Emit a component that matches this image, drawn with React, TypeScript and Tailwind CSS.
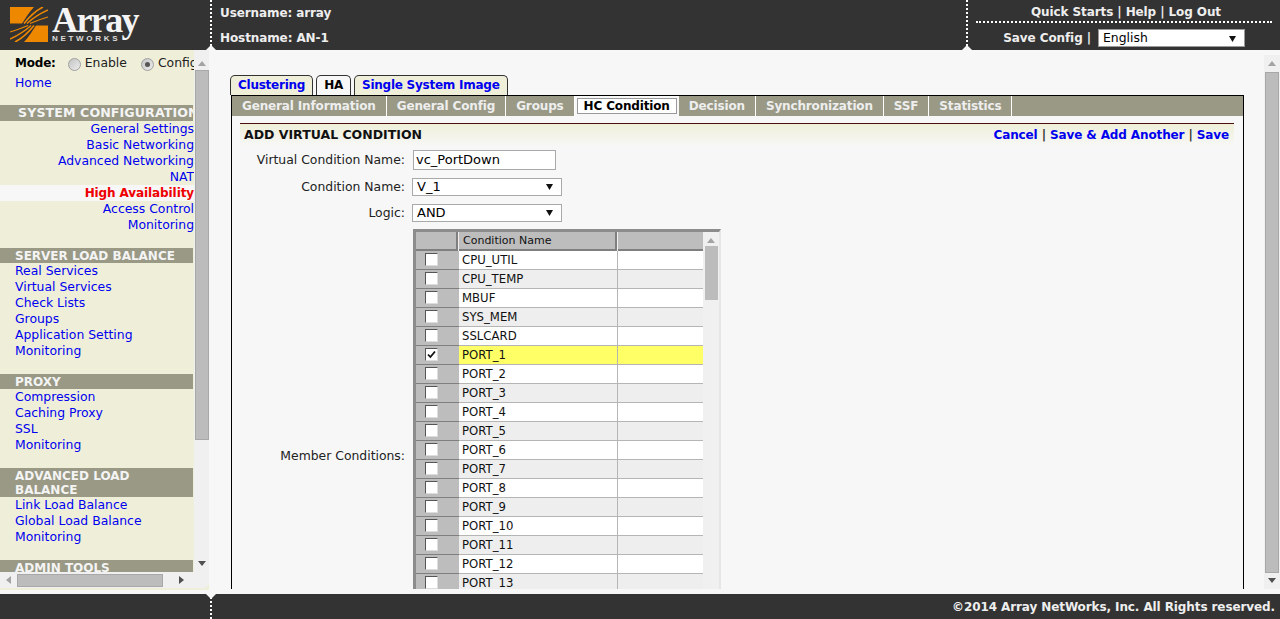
import React from "react";

const font = { fontFamily: '"DejaVu Sans", Verdana, sans-serif' };

const SECTIONS = [
  {
    title: ["SYSTEM CONFIGURATION"],
    right: true,
    items: ["General Settings", "Basic Networking", "Advanced Networking", "NAT", "High Availability", "Access Control", "Monitoring"],
  },
  {
    title: ["SERVER LOAD BALANCE"],
    items: ["Real Services", "Virtual Services", "Check Lists", "Groups", "Application Setting", "Monitoring"],
  },
  { title: ["PROXY"], items: ["Compression", "Caching Proxy", "SSL", "Monitoring"] },
  {
    title: ["ADVANCED LOAD", "BALANCE"],
    items: ["Link Load Balance", "Global Load Balance", "Monitoring"],
  },
  { title: ["ADMIN TOOLS"], items: [] as string[] },
];

const SUB_TABS = ["General Information", "General Config", "Groups", "HC Condition", "Decision", "Synchronization", "SSF", "Statistics"];

const CONDITIONS = [
  "CPU_UTIL", "CPU_TEMP", "MBUF", "SYS_MEM", "SSLCARD", "PORT_1", "PORT_2", "PORT_3", "PORT_4", "PORT_5",
  "PORT_6", "PORT_7", "PORT_8", "PORT_9", "PORT_10", "PORT_11", "PORT_12", "PORT_13", "PORT_14", "PORT_15",
  "PORT_16", "PORT_17", "PORT_18",
];

function Arrow({ dir, dark }: { dir: "up" | "down" | "left" | "right"; dark?: boolean }) {
  const pts = {
    up: "0,5 8,5 4,0",
    down: "0,0 8,0 4,5",
    left: "5,0 5,8 0,4",
    right: "0,0 0,8 5,4",
  }[dir];
  const vertical = dir === "up" || dir === "down";
  return (
    <svg width={vertical ? 8 : 5} height={vertical ? 5 : 8} className="block">
      <polygon points={pts} fill={dark ? "#505050" : "#a3a3a3"} />
    </svg>
  );
}

function FakeSelect({ value, className }: { value: string; className: string }) {
  return (
    <div className={`flex items-center justify-between bg-white pl-1 pr-2 text-black ${className}`}>
      <span>{value}</span>
      <svg width="7" height="6"><polygon points="0,0 7,0 3.5,6" fill="#111" /></svg>
    </div>
  );
}

function Check({ on }: { on?: boolean }) {
  return (
    <div className="flex h-[13px] w-[13px] items-center justify-center border border-t-[#555] border-l-[#555] border-r-[#ddd] border-b-[#ddd] bg-white">
      {on && (
        <svg width="9" height="9" viewBox="0 0 9 9">
          <path d="M1 4.5 L3.4 7 L8 1.5" fill="none" stroke="#111" strokeWidth="1.8" />
        </svg>
      )}
    </div>
  );
}

function Radio({ on }: { on?: boolean }) {
  return (
    <div className="mt-[3px] flex h-[13px] w-[13px] items-center justify-center rounded-full border border-[#a0a0a0] bg-gradient-to-br from-[#c4c4c4] to-[#ececec]">
      {on && <div className="h-[5px] w-[5px] rounded-full bg-[#555]" />}
    </div>
  );
}

function LogoHalf() {
  return (
    <>
      <path d="M0 0H24C19 5 16 11 12 16.5H0Z" fill="#ee8800" />
      <path d="M14 16.5C20 9 25 4 33 0" fill="none" stroke="#ee8800" strokeWidth="1.6" />
      <path d="M17 16.5C23 11 29 7 38 3" fill="none" stroke="#ee8800" strokeWidth="1.4" />
      <path d="M20 16.5C26 14 31 12 38 10" fill="none" stroke="#ee8800" strokeWidth="1.2" />
    </>
  );
}

function Logo() {
  return (
    <div className="flex items-start pl-[10px] pt-[7px]">
      <svg width="38" height="35" viewBox="0 0 38 35" className="shrink-0">
        <LogoHalf />
        <g transform="rotate(180 19 17.5)">
          <LogoHalf />
        </g>
      </svg>
      <div className="ml-[4px] flex flex-col">
        <span className="text-[36px] font-bold leading-[27px] tracking-[-1.6px] text-[#f4f4f4]" style={{ fontFamily: '"Liberation Serif", serif' }}>
          Array
        </span>
        <span className="mt-[1px] text-[8px] font-bold leading-[8px] tracking-[2.7px] text-[#dddddd]" style={{ fontFamily: '"Liberation Sans", sans-serif' }}>
          NETWORKS
        </span>
      </div>
    </div>
  );
}

function Header() {
  return (
    <div className="flex h-[50px] shrink-0 bg-[#333333] text-[12px] font-bold tracking-[-0.1px] text-[#eeeeee]">
      <div className="w-[210px] shrink-0">
        <Logo />
      </div>
      <div className="relative w-[2px] shrink-0 border-l-2 border-dotted border-white">
        <div className="absolute bottom-0 -left-[6px] h-0 w-0 border-x-[5px] border-b-[5px] border-x-transparent border-b-[#f7f7f7]" />
      </div>
      <div className="flex flex-1 flex-col pl-2 pt-[5px] leading-[16px]">
        <div className="h-[25px]">Username: array</div>
        <div>Hostname: AN-1</div>
      </div>
      <div className="relative w-[2px] shrink-0 border-l-2 border-dotted border-white">
        <div className="absolute bottom-0 -left-[6px] h-0 w-0 border-x-[5px] border-b-[5px] border-x-transparent border-b-[#f7f7f7]" />
      </div>
      <div className="flex w-[312px] shrink-0 flex-col pl-[8px] pr-[8px]">
        <div className="flex h-[23px] items-end justify-end border-b-2 border-dotted border-white pr-[51px] pb-[1px] leading-[16px]">
          Quick Starts | Help | Log Out
        </div>
        <div className="mt-[5px] flex items-center justify-end pr-[27px]">
          <span className="mt-[1px] mr-[7px]">Save Config |</span>
          <FakeSelect value="English" className="h-[18px] w-[147px] border border-[#999] pt-[2px] text-[12.4px] font-normal tracking-normal" />
        </div>
      </div>
    </div>
  );
}

function Sidebar() {
  return (
    <div className="flex h-[540px] w-[209px] shrink-0 flex-col overflow-hidden border-b-2 border-b-[#efefd9] bg-[#efefd9]">
      <div className="flex h-[522px] shrink-0 bg-[#f0f0f0]">
        <div className="w-[194px] shrink-0 overflow-hidden bg-[#efefd9] pt-[5px] text-[12.4px] leading-[16px]">
          <div className="flex items-start whitespace-nowrap pl-[15px] text-[#222]">
            <b className="text-[12px] tracking-[-0.2px] text-black">Mode:</b>
            <span className="ml-[12px]"><Radio /></span>
            <span className="ml-[4px]">Enable</span>
            <span className="ml-[14px]"><Radio on /></span>
            <span className="ml-[4px]">Config</span>
          </div>
          <div className="mt-[4px] pl-[15px] text-[#0000ee]">Home</div>
          {SECTIONS.map((s, i) => (
            <div key={i} className={i === 0 ? "mt-[14px]" : "mt-[15px]"}>
              <div className={`w-[193px] overflow-hidden whitespace-nowrap bg-[#999985] pt-[1px] font-bold leading-[14px] text-[#f4f4f4] ${s.right ? "pb-[1px] pl-[18px] text-[12.6px] tracking-[0.1px]" : "pl-[15px] text-[12px]"}`}>
                {s.title.map((t) => (
                  <div key={t}>{t}</div>
                ))}
              </div>
              {s.items.map((it) => (
                <div
                  key={it}
                  className={`h-[16px] whitespace-nowrap ${s.right ? "text-right" : "pl-[15px]"} ${
                    it === "High Availability" ? "bg-[#f7f7f7] text-[12px] font-bold tracking-[-0.1px] text-[#ee0000]" : "text-[#0000ee]"
                  }`}
                >
                  {it}
                </div>
              ))}
            </div>
          ))}
        </div>
        <div className="flex w-[15px] shrink-0 flex-col items-center pt-[11px]">
          <Arrow dir="up" />
          <div className="mt-[4px] h-[370px] w-[14px] border border-[#a8a8a8] bg-[#bcbcbc]" />
          <div className="mt-auto mb-[6px]"><Arrow dir="down" dark /></div>
        </div>
      </div>
      <div className="flex h-[16px] shrink-0 items-center rounded-br-[6px] bg-[#f0f0f0] pl-[6px] pr-[25px]">
        <Arrow dir="left" />
        <div className="ml-[6px] h-[13px] w-[146px] border border-[#a8a8a8] bg-[#bcbcbc]" />
        <div className="ml-auto"><Arrow dir="right" dark /></div>
      </div>
    </div>
  );
}

function ConditionTable() {
  return (
    <div className="flex h-[455px] w-[308px] border-t-[3px] border-l-[3px] border-r-[2px] border-t-[#8c8c8c] border-l-[#8c8c8c] border-r-[#e6e6e6] bg-[#f0f0f0] text-[11.7px] text-[#111]">
      <div className="w-[287px] shrink-0 overflow-hidden">
        <div className="flex h-[19px] bg-[#f0f0f0]">
          <div className="w-[42px] shrink-0 border-b-2 border-r-2 border-b-[#7f7f7f] border-r-[#7f7f7f] bg-[#bdbdbd]" />
          <div className="ml-px w-[158px] shrink-0 border-b-2 border-r-2 border-b-[#7f7f7f] border-r-[#7f7f7f] bg-[#bdbdbd] pl-1 text-[11px] leading-[17px]">
            Condition Name
          </div>
          <div className="ml-px flex-1 border-b-2 border-b-[#7f7f7f] bg-[#bdbdbd]" />
        </div>
        {CONDITIONS.map((c, i) => {
          const picked = c === "PORT_1";
          return (
            <div key={c} className={`flex h-[19px] ${picked ? "bg-[#ffff66]" : i % 2 ? "bg-[#eeeeee]" : "bg-white"}`}>
              <div className="flex w-[43px] shrink-0 items-center justify-center border-b border-b-[#7f7f7f] bg-[#bdbdbd] pr-[12px] pb-[2px]">
                <Check on={picked} />
              </div>
              <div className="w-[159px] shrink-0 border-b border-r border-[#b5b5b5] pl-[3px] leading-[18px]">{c}</div>
              <div className="flex-1 border-b border-[#b5b5b5]" />
            </div>
          );
        })}
      </div>
      <div className="flex flex-1 flex-col items-center pt-[6px]">
        <Arrow dir="up" />
        <div className="mt-[3px] h-[54px] w-[13px] bg-[#bcbcbc]" />
      </div>
    </div>
  );
}

function MainPanel() {
  return (
    <div className="flex h-[539px] flex-1 overflow-hidden">
      <div className="flex-1 overflow-hidden pl-[21px] pt-[25px]">
        <div className="flex text-[12px] font-bold leading-[17px] tracking-[-0.25px]">
          <div className="h-[20px] rounded-t-[5px] border border-b-0 border-[#333] bg-[#efefd9] px-[7px] pt-[1px] text-[#0000ee]">Clustering</div>
          <div className="ml-[3px] h-[20px] rounded-t-[5px] border border-b-0 border-[#333] bg-[#f7f7f7] px-[7px] pt-[1px] text-black">HA</div>
          <div className="ml-[3px] h-[20px] rounded-t-[5px] border border-b-0 border-[#333] bg-[#efefd9] px-[7px] pt-[1px] text-[#0000ee]">Single System Image</div>
        </div>
        <div className="ml-px h-[500px] w-[1013px] border-x border-t border-black">
          <div className="flex h-[20px] bg-[#999985] text-[12px] font-bold leading-[20px] tracking-[-0.15px] text-[#eeeeee]">
            {SUB_TABS.map((t) =>
              t === "HC Condition" ? (
                <div key={t} className="bg-[#f7f7f7] p-[2px]">
                  <div className="h-[16px] border border-[#999] bg-white px-[6px] leading-[14px] text-black">{t}</div>
                </div>
              ) : (
                <div key={t} className="border-r border-white px-[10px]">
                  {t}
                </div>
              )
            )}
          </div>
          <div className="px-[8px] pt-[7px]">
            <div className="flex h-[23px] w-[994px] justify-between border-t border-[#4a0f0f] bg-gradient-to-b from-[#efefd9] to-[#f7f7f7] pl-[4px] pr-[5px] pt-[3px] text-[12px] font-bold leading-[15px] tracking-[-0.12px]">
              <span className="text-[12.5px] tracking-normal text-[#111]">ADD VIRTUAL CONDITION</span>
              <span className="mt-[1px] text-[#0000ee]">
                Cancel <span className="text-[#333]">|</span> Save &amp; Add Another <span className="text-[#333]">|</span> Save
              </span>
            </div>
            <div className="mt-[4px] grid grid-cols-[165px_1fr] items-center gap-y-[8px] text-[12.4px] leading-[16px] text-[#222]">
              <div className="text-right">Virtual Condition Name:</div>
              <div className="ml-[8px] flex h-[20px] w-[143px] items-center border border-[#a9a9a9] bg-white pl-[2px] text-[13px] text-black">vc_PortDown</div>
              <div className="text-right">Condition Name:</div>
              <FakeSelect value="V_1" className="ml-[7px] h-[18px] w-[150px] border border-[#a9a9a9] text-[13px]" />
              <div className="text-right">Logic:</div>
              <FakeSelect value="AND" className="ml-[7px] h-[18px] w-[150px] border border-[#a9a9a9] text-[13px]" />
              <div className="-mt-[2px] text-right">Member Conditions:</div>
              <div className="-mt-[1px] ml-[8px]"><ConditionTable /></div>
            </div>
          </div>
        </div>
      </div>
      <div className="mt-[5px] flex h-[534px] w-[16px] shrink-0 flex-col items-center bg-[#f0f0f0] pt-[6px]">
        <Arrow dir="up" />
        <div className="mt-[6px] h-[501px] w-[14px] border border-[#a8a8a8] bg-[#bcbcbc]" />
        <div className="mt-auto mb-[6px]"><Arrow dir="down" dark /></div>
      </div>
    </div>
  );
}

function Footer() {
  return (
    <div className="relative flex h-[25px] shrink-0 items-center justify-end bg-[#333333] pr-[5px] text-[12px] font-bold tracking-[-0.1px] text-[#eeeeee]">
      <div className="absolute top-0 left-[210px] h-full w-[2px] border-l-2 border-dotted border-white" />
      <div className="absolute top-0 left-[206px] h-0 w-0 border-x-[5px] border-t-[5px] border-x-transparent border-t-[#f7f7f7]" />
      ©2014 Array NetWorks, Inc. All Rights reserved.
    </div>
  );
}

export default function App() {
  return (
    <div className="flex h-[619px] w-[1280px] flex-col overflow-hidden bg-[#f7f7f7]" style={font}>
      <Header />
      <div className="flex h-[544px] shrink-0">
        <Sidebar />
        <MainPanel />
      </div>
      <Footer />
    </div>
  );
}
